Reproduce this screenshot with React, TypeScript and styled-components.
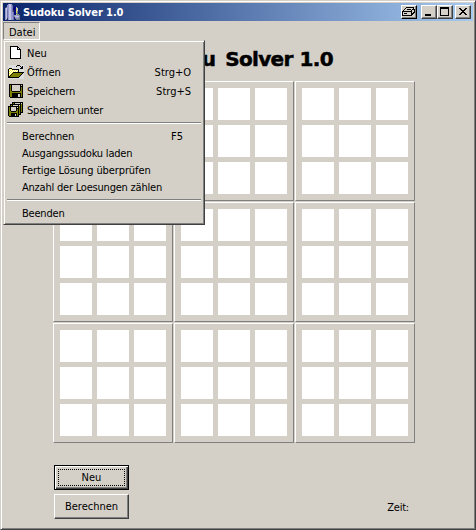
import React from "react";
import styled, { createGlobalStyle, css } from "styled-components";

const face = "#d4d0c8";
const shadow = "#808080";
const dark = "#404040";

const GlobalStyle = createGlobalStyle`
  * { box-sizing: border-box; }
  html, body { margin: 0; padding: 0; background: ${face}; overflow: hidden; }
  body {
    font: 11px/15px "DejaVu Sans Condensed", "DejaVu Sans", Tahoma, sans-serif;
    font-stretch: condensed;
    color: #000;
  }
`;

const raised = css`
  border: 1px solid;
  border-color: #fff ${dark} ${dark} #fff;
  box-shadow: inset -1px -1px 0 ${shadow};
`;

const Window = styled.main`
  position: relative;
  width: 476px;
  height: 530px;
  display: flex;
  flex-direction: column;
  padding: 2px;
  background: ${face};
  border: 1px solid;
  border-color: ${face} ${dark} ${dark} ${face};
  box-shadow: inset 1px 1px 0 #fff, inset -1px -1px 0 ${shadow};
`;

const TitleBar = styled.header`
  display: flex;
  align-items: center;
  flex: none;
  height: 18px;
  padding: 0 2px;
  background: linear-gradient(90deg, #0a246a, #a6caf0);
`;

const Caption = styled.span`
  flex: 1;
  margin-left: 2px;
  color: #fff;
  font-weight: bold;
  letter-spacing: -0.06px;
  white-space: pre;
`;

const CaptionButton = styled.button<{ $gap?: number; $heavy?: boolean }>`
  ${raised}
  width: 16px;
  height: 14px;
  margin: 0 0 0 ${(p) => p.$gap ?? 0}px;
  padding: 0;
  display: flex;
  background: ${face};
  ${(p) => p.$heavy && "border-right-color: #000; border-bottom-color: #000;"}
`;

const MenuBar = styled.nav`
  position: relative;
  height: 18px;
  margin-top: 1px;
  flex: none;
`;

const MenuTitle = styled.div`
  width: 37px;
  height: 18px;
  padding: 1px 0 0 5px;
  line-height: 17px;
  border: 1px solid;
  border-color: ${shadow} #fff #fff ${shadow};
`;

const Menu = styled.div`
  position: absolute;
  z-index: 1;
  left: 0;
  top: 18px;
  width: 202px;
  height: 185px;
  padding: 2px;
  background: ${face};
  border: 1px solid;
  border-color: ${face} ${dark} ${dark} ${face};
  box-shadow: inset 1px 1px 0 #fff, inset -1px -1px 0 ${shadow};
`;

const MenuRow = styled.div<{ $icon?: boolean }>`
  display: flex;
  align-items: center;
  height: ${(p) => (p.$icon ? 19 : 17)}px;
  padding: 0 ${(p) => (p.$icon ? 11 : 19)}px 0 ${(p) => (p.$icon ? 1 : 16)}px;

  > span:not(:first-child) {
    padding-top: ${(p) => (p.$icon ? 2 : 0)}px;
  }
`;

const IconSlot = styled.span`
  width: 17px;
  height: 19px;
  margin-right: 3px;
  display: flex;
  align-items: center;
  justify-content: center;
`;

const Label = styled.span<{ $track?: number }>`
  letter-spacing: ${(p) => p.$track ?? 0}px;
  white-space: pre;
`;

const Shortcut = styled(Label)`
  margin-left: auto;
`;

const Separator = styled.div`
  height: 2px;
  margin: 3px 1px 4px;
  border-top: 1px solid ${shadow};
  border-bottom: 1px solid #fff;
`;

const Heading = styled.h1`
  height: 24px;
  margin: 7px 0 0 132px;
  font: bold 20px/24px "DejaVu Sans", Verdana, sans-serif;
  font-stretch: normal;
  letter-spacing: -0.65px;
  word-spacing: 0.5px;
  -webkit-text-stroke: 0.5px #000;
  white-space: pre;
`;

const FirstWord = styled.span`
  margin-right: 3px;
`;

const Board = styled.section`
  display: grid;
  grid-template-columns: repeat(3, 120px);
  grid-auto-rows: 120px;
  gap: 1px;
  margin: 10px 0 0 50px;
`;

const Block = styled.div`
  display: grid;
  grid-template-columns: repeat(3, 32px);
  grid-auto-rows: 32px;
  gap: 5px;
  padding: 6px;
  border: 1px solid;
  border-color: #fff ${shadow} ${shadow} #fff;
`;

const Cell = styled.div`
  background: #fff;
`;

const Footer = styled.footer`
  display: flex;
  justify-content: space-between;
  align-items: flex-end;
  margin: 22px 64px 0 51px;
`;

const Actions = styled.div`
  display: flex;
  flex-direction: column;
  gap: 4px;
`;

const PushButton = styled.button`
  ${raised}
  width: 75px;
  height: 25px;
  padding: 0;
  background: ${face};
  color: #000;
  font: inherit;
`;

const DefaultButton = styled(PushButton)`
  border-color: #000;
  box-shadow: inset 1px 1px 0 #fff, inset -1px -1px 0 ${dark}, inset -2px -2px 0 ${shadow};
  padding: 3px;
`;

const FocusRing = styled.span`
  display: block;
  height: 17px;
  line-height: 15px;
  border: 1px dotted #000;
`;

const Time = styled.div`
  height: 19px;
  line-height: 15px;
  letter-spacing: -0.2px;
`;

const Svg = styled.svg`
  display: block;
  flex: none;
`;

const palette: Record<string, string> = {
  "#": "#000000",
  W: "#ffffff",
  Y: "#ffff45",
  O: "#808000",
  G: "#d4d0c8",
  L: "#dedede",
  B: "#9298cf",
  P: "#6d72aa",
  V: "#c1c2e2",
  N: "#080880",
  K: "#303854",
  C: "#77818b",
  M: "#d8d35c",
};

/* Each row is a string whose characters index the palette. */
function PixelIcon({ rows }: { rows: string[] }) {
  const w = rows[0].length;
  return (
    <Svg width={w} height={rows.length} viewBox={`0 0 ${w} ${rows.length}`} shapeRendering="crispEdges">
      {rows.flatMap((row, y) =>
        [...row].map((c, x) =>
          palette[c] ? <rect key={`${x}-${y}`} x={x} y={y} width="1" height="1" fill={palette[c]} /> : null
        )
      )}
    </Svg>
  );
}

const appIcon = [
  "...BVVB.........",
  "..BBVVBP........",
  "..BBVVBP.NN.....",
  "KPBBVVBP.NNV....",
  "BVBBVVBPNNNMV...",
  "BVBBVVBPNNNMV...",
  "BVPBVVBPKNNMV...",
  "BVPBVVBPKNNMC...",
  "BVPBVVBBPNNMC...",
  "BVPBVVBBPNNCC...",
  "BVPBVVBBPNNMCCK.",
  "BVPBVVBBPBBBBBC.",
  "BVPBVVBBPCVVVVC.",
  "BVPBVVBBPKBBBBC.",
  "BVKBVVBBPNCBBCC.",
  "BPKBVVBBPKNCCCC.",
];
const newIcon = [
  "########...",
  "#WWWWWW##..",
  "#WWWWWW#W#.",
  "#WWWWWW####",
  ...Array(8).fill("#WWWWWWWWW#"),
  "###########",
];
const openIcon = [
  "LLLLLLLLL###LLLL",
  "LLLLLLLL#LLL#L#L",
  "LLLLLLLLLLLLL##L",
  "L###LLLLLLLL###L",
  "#YWY#######LLLLL",
  "#WYWYWYWYW#LLLLL",
  "#YWYWYWYWY#LLLLL",
  "#WYWY###########",
  "#YWY#OOOOOOOOO#L",
  "#WY#OOOOOOOOO#LL",
  "#Y#OOOOOOOOO#LLL",
  "##OOOOOOOOO#LLLL",
  "###########LLLLL",
  "LLLLLLLLLLLLLLLL",
];
const saveIcon = [
  "##############",
  "#O#GGGGGGGG#G#",
  "#O#GGGGGGGG###",
  "#O#GGGGGGGG#O#",
  "#O#GGGGGGGG#O#",
  "#O#GGGGGGGG#O#",
  "#O#GGGGGGGG#O#",
  "#OO########OO#",
  "#OOOOOOOOOOOO#",
  "#OO#########O#",
  "#OO######GG#O#",
  "#OO######GG#O#",
  "#OO######GG#O#",
  ".#############",
];
const saveAllIcon = [
  "....###########",
  "....#O#GGGGG#G#",
  "..###########O#",
  "..#O#GGGGG#G#O#",
  "###########O#O#",
  "#O#GGGGG#G#O#O#",
  "#O#GGGGG###O#O#",
  "#O#GGGGG#O#O#O#",
  "#O#GGGGG#O#O#O#",
  "#OO#####OO#O#O#",
  "#OOOOOOOOO#O###",
  "#OO######O#O#..",
  "#OO####G#O###..",
  "#OO####G#O#....",
  ".##########....",
];
const printIcon = [
  "..............",
  "....########..",
  "...#.......#..",
  "..#..####.###.",
  ".#.......#..#.",
  "##########..#.",
  "#........#.##.",
  "#.###....###..",
  "#........##...",
  "##########....",
];
const minIcon = [...Array(8).fill("............"), "...######...", "...######..."];
const maxIcon = [
  "............",
  "..#########.",
  "..#########.",
  ...Array(6).fill("..#.......#."),
  "..#########.",
];
const closeIcon = [
  "............",
  "............",
  "...##....##.",
  "....##..##..",
  ".....####...",
  "......##....",
  ".....####...",
  "....##..##..",
  "...##....##.",
];

const fileItems = [
  { text: "Neu", icon: newIcon, track: 0 },
  { text: "Öffnen", icon: openIcon, key: "Strg+O", track: 0.1 },
  { text: "Speichern", icon: saveIcon, key: "Strg+S", track: -0.15 },
  { text: "Speichern unter", icon: saveAllIcon, track: -0.2 },
];
const solverItems = [
  { text: "Berechnen", key: "F5", track: -0.1 },
  { text: "Ausgangssudoku laden", track: -0.2 },
  { text: "Fertige Lösung überprüfen", track: -0.1 },
  { text: "Anzahl der Loesungen zählen", track: -0.21 },
];

export default function App() {
  return (
    <Window>
      <GlobalStyle />
      <TitleBar>
        <PixelIcon rows={appIcon} />
        <Caption>Sudoku Solver 1.0</Caption>
        <CaptionButton $heavy aria-label="Drucken"><PixelIcon rows={printIcon} /></CaptionButton>
        <CaptionButton $gap={4} aria-label="Minimieren"><PixelIcon rows={minIcon} /></CaptionButton>
        <CaptionButton aria-label="Maximieren"><PixelIcon rows={maxIcon} /></CaptionButton>
        <CaptionButton $gap={2} aria-label="Schließen"><PixelIcon rows={closeIcon} /></CaptionButton>
      </TitleBar>
      <MenuBar>
        <MenuTitle>Datei</MenuTitle>
        <Menu>
          {fileItems.map((item) => (
            <MenuRow key={item.text} $icon>
              <IconSlot><PixelIcon rows={item.icon} /></IconSlot>
              <Label $track={item.track}>{item.text}</Label>
              {item.key && <Shortcut>{item.key}</Shortcut>}
            </MenuRow>
          ))}
          <Separator />
          {solverItems.map((item) => (
            <MenuRow key={item.text}>
              <Label $track={item.track}>{item.text}</Label>
              {item.key && <Shortcut>{item.key}</Shortcut>}
            </MenuRow>
          ))}
          <Separator />
          <MenuRow><Label $track={-0.2}>Beenden</Label></MenuRow>
        </Menu>
      </MenuBar>
      <Heading><FirstWord>Sudoku</FirstWord> Solver 1.0</Heading>
      <Board>
        {Array.from({ length: 9 }, (_, b) => (
          <Block key={b}>
            {Array.from({ length: 9 }, (_, c) => <Cell key={c} />)}
          </Block>
        ))}
      </Board>
      <Footer>
        <Actions>
          <DefaultButton><FocusRing>Neu</FocusRing></DefaultButton>
          <PushButton>Berechnen</PushButton>
        </Actions>
        <Time>Zeit:</Time>
      </Footer>
    </Window>
  );
}
